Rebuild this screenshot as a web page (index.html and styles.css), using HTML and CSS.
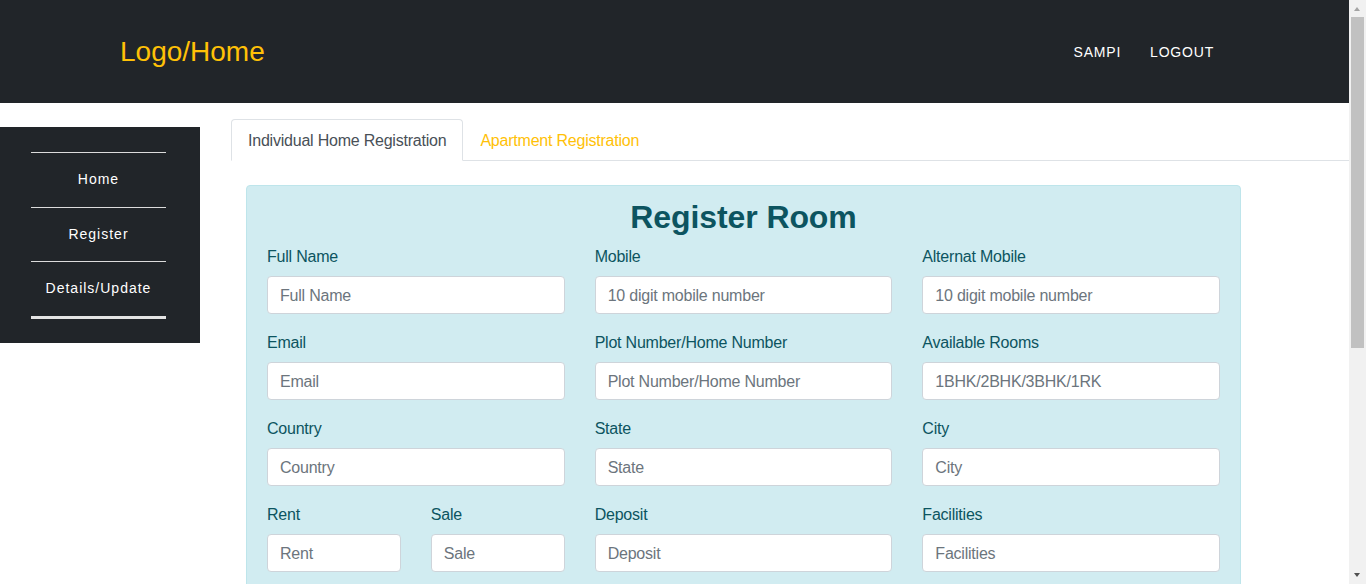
FILE: index.html
```html
<!DOCTYPE html>
<html lang="en">
<head>
<meta charset="utf-8">
<title>Register Room</title>
<link rel="stylesheet" href="styles.css">
</head>
<body>
<header class="topbar">
  <a class="brand" href="#">Logo/Home</a>
  <nav class="topnav">
    <a href="#">SAMPI</a>
    <a href="#">LOGOUT</a>
  </nav>
</header>
<div class="layout">
  <aside class="sidebar">
    <ul class="side-menu">
      <li><a href="#">Home</a></li>
      <li><a href="#">Register</a></li>
      <li><a href="#">Details/Update</a></li>
    </ul>
  </aside>
  <main class="main">
    <div class="tabs">
      <a class="tab active" href="#">Individual Home Registration</a>
      <a class="tab" href="#">Apartment Registration</a>
    </div>
    <form class="card">
      <h2 class="card-title">Register Room</h2>
      <div class="form-grid">
        <div class="field"><label>Full Name</label><input type="text" placeholder="Full Name"></div>
        <div class="field"><label>Mobile</label><input type="text" placeholder="10 digit mobile number"></div>
        <div class="field"><label>Alternat Mobile</label><input type="text" placeholder="10 digit mobile number"></div>

        <div class="field"><label>Email</label><input type="text" placeholder="Email"></div>
        <div class="field"><label>Plot Number/Home Number</label><input type="text" placeholder="Plot Number/Home Number"></div>
        <div class="field"><label>Available Rooms</label><input type="text" placeholder="1BHK/2BHK/3BHK/1RK"></div>

        <div class="field"><label>Country</label><input type="text" placeholder="Country"></div>
        <div class="field"><label>State</label><input type="text" placeholder="State"></div>
        <div class="field"><label>City</label><input type="text" placeholder="City"></div>

        <div class="split">
          <div class="field"><label>Rent</label><input type="text" placeholder="Rent"></div>
          <div class="field"><label>Sale</label><input type="text" placeholder="Sale"></div>
        </div>
        <div class="field"><label>Deposit</label><input type="text" placeholder="Deposit"></div>
        <div class="field"><label>Facilities</label><input type="text" placeholder="Facilities"></div>
      </div>
    </form>
  </main>
</div>
<div class="scrollbar" aria-hidden="true">
  <span class="sb-up"></span>
  <span class="sb-thumb"></span>
  <span class="sb-down"></span>
</div>
</body>
</html>
```
FILE: styles.css
```css
* { box-sizing: border-box; }

body {
  margin: 0 17px 0 0;
  font-family: "Liberation Sans", Arial, sans-serif;
  font-size: 16px;
  line-height: 1.5;
  letter-spacing: -0.22px;
  color: #212529;
  background: #fff;
}

a { text-decoration: none; }

.topbar {
  height: 103px;
  background: #212529;
  display: flex;
  align-items: center;
  justify-content: space-between;
  padding: 0 135px 0 120px;
}

.brand {
  color: #ffc107;
  font-size: 28px;
  line-height: 1.15;
  letter-spacing: 0;
  padding-top: 2px;
}

.topnav {
  display: flex;
  gap: 29px;
}

.topnav a {
  color: #fff;
  font-size: 14px;
  letter-spacing: 0.8px;
  line-height: 20px;
}

.layout {
  display: flex;
  align-items: flex-start;
}

.sidebar {
  width: 200px;
  flex: none;
  margin-top: 24px;
  background: #212529;
  padding: 25px 34px 24px 31px;
}

.side-menu {
  list-style: none;
  margin: 0;
  padding: 0;
  border-bottom: 3px solid #e4e4e4;
}

.side-menu li {
  border-top: 1px solid #dcdcdc;
  padding: 16px 0;
  text-align: center;
}

.side-menu a {
  display: block;
  color: #fff;
  font-size: 14px;
  letter-spacing: 1px;
  line-height: 21.5px;
}

.main {
  flex: 1;
  margin-left: 31px;
  padding-top: 16px;
  padding-bottom: 120px;
}

.tabs {
  display: flex;
  border-bottom: 1px solid #dee2e6;
}

.tab {
  display: block;
  padding: 9px 16px 7px;
  border: 1px solid transparent;
  border-top-left-radius: 4px;
  border-top-right-radius: 4px;
  margin-bottom: -1px;
  color: #ffc107;
}

.tab.active {
  color: #495057;
  background: #fff;
  border-color: #dee2e6 #dee2e6 #fff;
}

.card {
  display: block;
  width: 995px;
  margin: 24px 0 0 15px;
  background: #d1ecf1;
  border: 1px solid #bee5eb;
  border-radius: 4px;
  padding: 12px 20px;
}

.card-title {
  margin: 0 0 8px;
  text-align: center;
  font-size: 32px;
  line-height: 1.2;
  font-weight: bold;
  letter-spacing: -0.1px;
  color: #0c5460;
}

.form-grid {
  display: grid;
  grid-template-columns: repeat(3, 1fr);
  column-gap: 30px;
}

.split {
  display: grid;
  grid-template-columns: 1fr 1fr;
  column-gap: 30px;
}

.field {
  margin-bottom: 16px;
}

.field label {
  display: block;
  margin-bottom: 8px;
  padding-top: 1px;
  height: 24px;
  color: #0c5460;
}

.field input {
  display: block;
  width: 100%;
  height: 38px;
  padding: 7px 12px 5px;
  font-family: inherit;
  font-size: 16px;
  line-height: 1.5;
  letter-spacing: -0.22px;
  color: #495057;
  background: #fff;
  border: 1px solid #ced4da;
  border-radius: 4px;
}

.field input::placeholder {
  color: #6c757d;
  opacity: 1;
}

.scrollbar {
  position: fixed;
  top: 0;
  right: 0;
  width: 17px;
  height: 100vh;
  background: #f1f1f1;
}

.sb-up,
.sb-down {
  position: absolute;
  left: 5px;
  width: 0;
  height: 0;
  border-left: 3.5px solid transparent;
  border-right: 3.5px solid transparent;
}

.sb-up {
  top: 7px;
  border-bottom: 4px solid #a3a3a3;
}

.sb-down {
  bottom: 7px;
  border-top: 4px solid #505050;
}

.sb-thumb {
  position: absolute;
  top: 17px;
  left: 2px;
  width: 13px;
  height: 331px;
  background: #c1c1c1;
}
```
